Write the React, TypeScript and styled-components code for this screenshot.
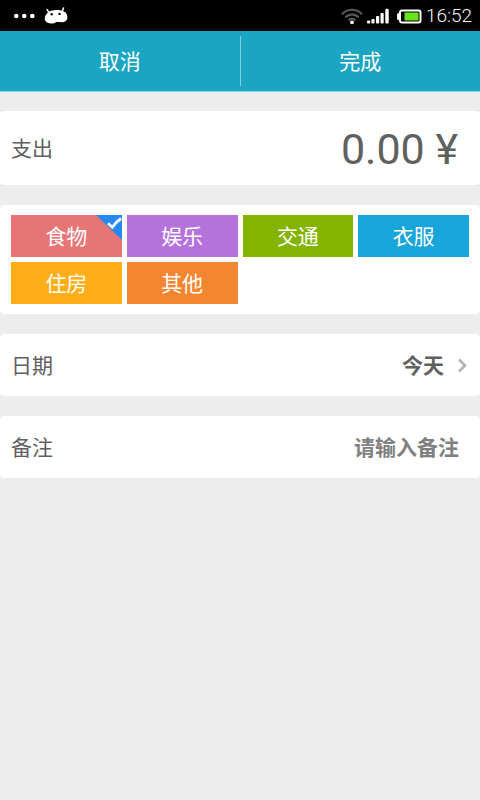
import React, { useState } from 'react';
import styled, { createGlobalStyle } from 'styled-components';

const GlobalStyle = createGlobalStyle`
  * { box-sizing: border-box; }
  body {
    margin: 0;
    background: #ededed;
    color: #606060;
    font-family: Roboto, "Noto Sans CJK SC", sans-serif;
    font-size: 21px;
    line-height: 30px;
  }
  button, input { font: inherit; color: inherit; border: 0; padding: 0; margin: 0; background: none; }
  button { cursor: pointer; }
`;

const StatusBar = styled.div`
  display: flex;
  align-items: center;
  justify-content: space-between;
  height: 31px;
  padding: 1px 8px 0 13px;
  background: #000;
  color: #f4f4f4;
`;

const StatusGroup = styled.div<{ $gap: number }>`
  display: flex;
  align-items: center;
  gap: ${(p) => p.$gap}px;
  svg { display: block; }
`;

const Clock = styled.time`
  font-size: 19px;
  font-weight: 300;
  line-height: 30px;
`;

const ActionBar = styled.header`
  display: flex;
  align-items: center;
  height: 61px;
  background: #1ba5c2;
  border-bottom: 1px solid #8fd3e1;
`;

const Divider = styled.span`
  width: 1px;
  height: 50px;
  background: #83cddc;
`;

const ActionButton = styled.button`
  flex: 1;
  align-self: stretch;
  padding-top: 2px;
  color: #fff;
`;

const Form = styled.main`
  display: flex;
  flex-direction: column;
  gap: 20px;
  padding-top: 19px;
`;

const Card = styled.section`
  display: flex;
  align-items: center;
  justify-content: space-between;
  gap: 20px;
  padding: 17px 12px 15px 11px;
  background: #fff;
  border-radius: 4px;
`;

const AmountCard = styled(Card)`
  padding: 13px 22px 11px 11px;
`;

const Label = styled.label`
  flex: none;
`;

const AmountInput = styled.input`
  flex: 1;
  min-width: 0;
  height: 50px;
  font-size: 43px;
  text-align: right;
  outline: none;
`;

const NoteInput = styled.input`
  flex: 1;
  min-width: 0;
  height: 30px;
  margin-right: 9px;
  font-weight: 700;
  text-align: right;
  outline: none;
  &::placeholder { color: #808080; opacity: 1; }
`;

const DateButton = styled.button`
  display: flex;
  align-items: center;
  gap: 13px;
  font-weight: 700;
  svg { display: block; }
`;

const CategoryGrid = styled.fieldset`
  display: grid;
  grid-template-columns: repeat(4, 1fr);
  gap: 5px;
  min-width: 0;
  margin: 0;
  padding: 10px 11px;
  border: 0;
  border-radius: 4px;
  background: #fff;
`;

const Tile = styled.label<{ $color: string }>`
  position: relative;
  display: flex;
  align-items: center;
  justify-content: center;
  height: 42px;
  padding-top: 2px;
  background: ${(p) => p.$color};
  color: #fff;
  cursor: pointer;
`;

const TileRadio = styled.input`
  position: absolute;
  inset: 0;
  opacity: 0;
  cursor: pointer;
`;

const Corner = styled.svg`
  position: absolute;
  top: 0;
  right: 0;
`;

const categories = [
  { name: '食物', color: '#e87576' },
  { name: '娱乐', color: '#b672dc' },
  { name: '交通', color: '#84b400' },
  { name: '衣服', color: '#17a5da' },
  { name: '住房', color: '#ffae18' },
  { name: '其他', color: '#f38630' },
];

const DotsIcon = () => (
  <svg width="22" height="6" viewBox="0 0 22 6" fill="#fff" aria-hidden="true">
    <circle cx="3.3" cy="3" r="2.3" />
    <circle cx="11.3" cy="3" r="2.3" />
    <circle cx="19.3" cy="3" r="2.3" />
  </svg>
);

const RobotIcon = () => (
  <svg width="24" height="18" viewBox="0 0 24 18" aria-hidden="true">
    <path d="M3 2.500 5 5.500M19.500 1l-1.500 4" stroke="#fff" strokeWidth="1.5" strokeLinecap="round" />
    <path d="M2.600 7C4.500 3.800 9 3 13 3c6 0 10 2.300 10.400 6.500.3 3.800-2.200 5.800-5.900 5.800-2.200 0-3.800-.4-5.500 0-1.500 1-3 1.400-5 1.200C3 16.300.8 14.500.8 11.500c0-1.900.7-3.200 1.800-4.500Z" fill="#fff" />
    <circle cx="7.700" cy="7.300" r="1.200" fill="#000" />
    <circle cx="15.500" cy="6.900" r="1.200" fill="#000" />
  </svg>
);

const WifiIcon = () => (
  <svg width="22" height="17" viewBox="0 0 22 17" fill="none" stroke="#5c5c5c" strokeWidth="2" aria-hidden="true">
    <path d="M1 6.200C6.500.2 15.500.2 21 6.200" />
    <path d="M4.300 9.400c3.800-4 9.600-4 13.400 0" />
    <path d="M7.500 12.400c2-2.200 5-2.200 7 0" />
    <circle cx="11" cy="14.300" r="1.900" fill="#fff" stroke="none" />
  </svg>
);

const SignalIcon = () => (
  <svg width="23" height="16" viewBox="0 0 23 16" fill="#fff" aria-hidden="true">
    <rect x="0" y="12.500" width="3.200" height="3" rx="1" />
    <rect x="4.400" y="11" width="3.200" height="4.500" rx="1" />
    <rect x="9" y="8" width="3.200" height="7.500" rx="1" />
    <rect x="13.500" y="5" width="3.200" height="10.500" rx="1" />
    <rect x="18.300" y="0.800" width="3.400" height="14.700" rx="1" />
  </svg>
);

const BatteryIcon = () => (
  <svg width="26" height="15" viewBox="0 0 26 15" aria-hidden="true">
    <path d="M4.500 4H2.600Q1 4 1 5.500v4Q1 11 2.600 11H4.500" fill="#fff" />
    <rect x="4" y="1.500" width="20.500" height="12" rx="2" fill="#000" stroke="#fff" strokeWidth="2" />
    <rect x="8.500" y="3.500" width="14" height="8" fill="#66e51c" />
  </svg>
);

const Chevron = () => (
  <svg width="11" height="16" viewBox="0 0 11 16" fill="none" stroke="#b4b4b4" strokeWidth="2.600" aria-hidden="true">
    <path d="M2 1.500l6 6-6 6" />
  </svg>
);

const SelectedCorner = () => (
  <Corner width="26" height="25" viewBox="0 0 26 25" aria-hidden="true">
    <path d="M0 0h26v25Z" fill="#2488f5" />
    <path d="M12 8.300 16.300 12.200Q20 7 25 3.500" fill="none" stroke="#fff" strokeWidth="2.800" />
  </Corner>
);

export default function App() {
  const [selected, setSelected] = useState('食物');
  const [amount, setAmount] = useState('0.00 ¥');
  const [note, setNote] = useState('');

  return (
    <>
      <GlobalStyle />
      <StatusBar>
        <StatusGroup $gap={9}>
          <DotsIcon />
          <RobotIcon />
        </StatusGroup>
        <StatusGroup $gap={6}>
          <StatusGroup $gap={4}>
            <WifiIcon />
            <SignalIcon />
          </StatusGroup>
          <StatusGroup $gap={4}>
            <BatteryIcon />
            <Clock>16:52</Clock>
          </StatusGroup>
        </StatusGroup>
      </StatusBar>
      <ActionBar>
        <ActionButton type="button">取消</ActionButton>
        <Divider />
        <ActionButton type="button">完成</ActionButton>
      </ActionBar>
      <Form>
        <AmountCard>
          <Label htmlFor="amount">支出</Label>
          <AmountInput id="amount" value={amount} onChange={(e) => setAmount(e.target.value)} />
        </AmountCard>
        <CategoryGrid aria-label="支出">
          {categories.map((c) => (
            <Tile key={c.name} $color={c.color}>
              <TileRadio
                type="radio"
                name="category"
                checked={selected === c.name}
                onChange={() => setSelected(c.name)}
              />
              {c.name}
              {selected === c.name && <SelectedCorner />}
            </Tile>
          ))}
        </CategoryGrid>
        <Card>
          <Label htmlFor="date">日期</Label>
          <DateButton id="date" type="button">
            今天
            <Chevron />
          </DateButton>
        </Card>
        <Card>
          <Label htmlFor="note">备注</Label>
          <NoteInput
            id="note"
            placeholder="请输入备注"
            value={note}
            onChange={(e) => setNote(e.target.value)}
          />
        </Card>
      </Form>
    </>
  );
}
